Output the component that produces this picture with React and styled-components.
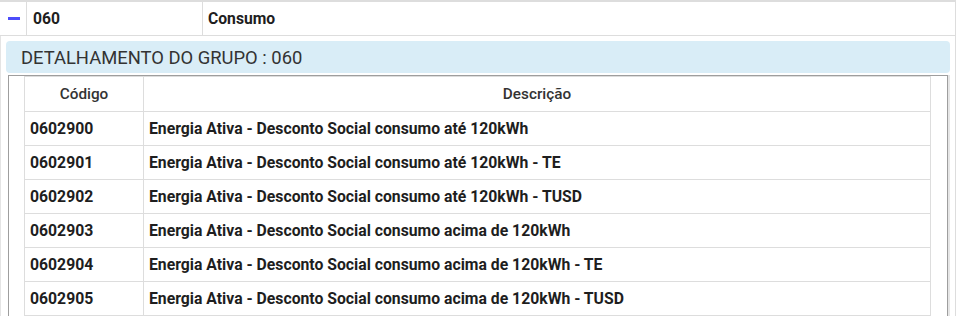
import styled, {createGlobalStyle} from 'styled-components'

const GlobalStyle = createGlobalStyle`
  body {
    margin: 0;
    background-color: #ffffff;
    font-family: Roboto, 'Liberation Sans', sans-serif;
    overflow: hidden;
  }
  * {
    box-sizing: border-box;
  }
`

const itemsList = [
  {code: '0602900', description: 'Energia Ativa - Desconto Social consumo até 120kWh'},
  {code: '0602901', description: 'Energia Ativa - Desconto Social consumo até 120kWh - TE'},
  {code: '0602902', description: 'Energia Ativa - Desconto Social consumo até 120kWh - TUSD'},
  {code: '0602903', description: 'Energia Ativa - Desconto Social consumo acima de 120kWh'},
  {code: '0602904', description: 'Energia Ativa - Desconto Social consumo acima de 120kWh - TE'},
  {code: '0602905', description: 'Energia Ativa - Desconto Social consumo acima de 120kWh - TUSD'},
]

const Page = styled.div`
  width: 956px;
  height: 316px;
  overflow: hidden;
`
const GroupRow = styled.div`
  display: flex;
  height: 36px;
  border-top: 2px solid #dddddd;
  border-bottom: 1px solid #dddddd;
`
const GroupCell = styled.div`
  display: flex;
  align-items: center;
  width: ${props => props.width || 'auto'};
  flex: ${props => (props.grow ? 1 : 'none')};
  padding-left: ${props => props.pad || '6px'};
  border-right: 1px solid #dddddd;
  font-size: 15.7px;
  font-weight: 700;
  color: #1e1e1e;
`
const CollapseIcon = styled.span`
  display: block;
  width: 12px;
  height: 3px;
  margin-bottom: 1px;
  background-color: #4d4dfa;
`
const DetailCell = styled.div`
  padding: 5px 5px 0 5px;
  border-left: 1px solid #e4e4e4;
  border-right: 1px solid #dddddd;
`
const PanelHeading = styled.div`
  display: flex;
  align-items: center;
  height: 32px;
  padding-left: 15px;
  background-color: #d9edf7;
  border-radius: 4px;
  font-size: 18.4px;
  color: #333333;
`
const PanelBody = styled.div`
  margin: 2px 2px 0 2px;
  padding: 0 16px 0 15px;
  border: 1px solid #9e9e9e;
  border-bottom: none;
  box-shadow: 2px 0 0 #e6e6e6;
`
const DetailTable = styled.table`
  width: 100%;
  border-collapse: collapse;
  font-size: 15.75px;
  color: #1e1e1e;
`
const HeadCell = styled.th`
  height: 35px;
  width: ${props => props.width || 'auto'};
  border: 1px solid #dddddd;
  font-size: 15.3px;
  font-weight: 500;
  color: #333333;
  text-align: center;
  padding: 0;
`
const BodyCell = styled.td`
  height: 34px;
  border: 1px solid #dddddd;
  padding: 0 0 0 5px;
  font-weight: 700;
  white-space: nowrap;
`

const App = () => (
  <Page>
    <GlobalStyle />
    <GroupRow>
      <GroupCell width="27px" pad="8px">
        <CollapseIcon />
      </GroupCell>
      <GroupCell width="176px">060</GroupCell>
      <GroupCell grow pad="5px">
        Consumo
      </GroupCell>
    </GroupRow>
    <DetailCell>
      <PanelHeading>DETALHAMENTO DO GRUPO : 060</PanelHeading>
      <PanelBody>
        <DetailTable>
          <thead>
            <tr>
              <HeadCell width="119px">Código</HeadCell>
              <HeadCell>Descrição</HeadCell>
            </tr>
          </thead>
          <tbody>
            {itemsList.map(each => (
              <tr key={each.code}>
                <BodyCell>{each.code}</BodyCell>
                <BodyCell>{each.description}</BodyCell>
              </tr>
            ))}
          </tbody>
        </DetailTable>
      </PanelBody>
    </DetailCell>
  </Page>
)

export default App
